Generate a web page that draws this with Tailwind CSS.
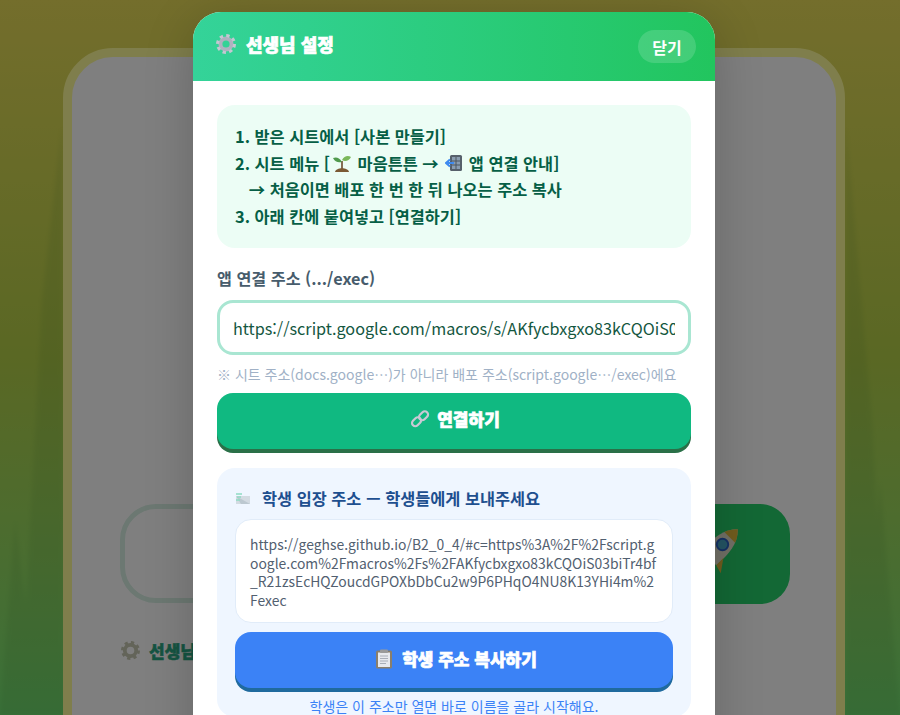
<!DOCTYPE html>
<html lang="ko">
<head>
<meta charset="utf-8">
<script src="https://cdn.jsdelivr.net/npm/@tailwindcss/browser@4"></script>
<title>선생님 설정</title>
</head>
<body class="font-['Noto_Sans_CJK_KR','Noto_Sans',sans-serif]">
<div class="relative h-[715px] w-[900px] overflow-hidden bg-gradient-to-b from-[#e8dc58] via-[#b4d048] to-[#72e272]">
  <svg class="absolute inset-0 blur-[2px]" width="900" height="715" viewBox="0 0 900 715" fill="#3f7a30" opacity="0.1">
    <path d="M20 715 L42 300 L62 125 L64 715Z"/>
    <path d="M0 715 L15 520 L40 715Z"/>
    <path d="M846 715 L846 125 L872 420 L886 715Z"/>
    <path d="M860 715 L880 480 L900 715Z"/>
  </svg>
  <div class="relative pl-[63px] pt-[48px]">
    <div class="flex h-[720px] w-[782px] flex-col rounded-[50px] border-[9px] border-[#fffc98] bg-white pl-[48px] pr-[46px] pt-[447px]">
      <div class="flex h-[100px] gap-4">
        <div class="h-[99px] flex-1 rounded-[36px] border-[5px] border-[#d8f0e4]"></div>
        <div class="flex w-[210px] items-center justify-center rounded-[30px] bg-[#27d16a] pb-[10px] pl-[66px]">
          <svg width="56" height="56" viewBox="0 0 44 44"><g transform="rotate(45 22 22)"><path d="M22 0C30 8 31 18 30 32H14C13 18 14 8 22 0Z" fill="#e4e0cc"/><path d="M22 0C25 3 27 6 28 9H16C17 6 19 3 22 0Z" fill="#e2b93c"/><circle cx="22" cy="17" r="4.5" fill="#49a9c8" stroke="#2d63c8" stroke-width="1.5"/><path d="M14 24L7 34L14 32ZM30 24L37 34L30 32Z" fill="#e2b93c"/><path d="M15 33H29L27 37H17Z" fill="#2d63c8"/></g></svg>
        </div>
      </div>
      <div class="mt-[37px] flex items-center gap-[9px] pl-[1px] text-[17px] font-black leading-none text-[#2aa884] [-webkit-text-stroke:0.5px_#2aa884]">
        <svg width="19" height="19" viewBox="0 0 20 20"><circle cx="10" cy="10" r="6" fill="none" stroke="#c7c8b2" stroke-width="4"/><circle cx="10" cy="10" r="8.5" fill="none" stroke="#c7c8b2" stroke-width="3" stroke-dasharray="3.4 3.3"/></svg>
        <span>선생님</span>
      </div>
    </div>
  </div>

  <div class="absolute inset-0 bg-black/50"></div>

  <div class="absolute left-[193px] top-[12px] h-[760px] w-[522px] overflow-hidden rounded-[28px] bg-white shadow-[0_10px_50px_rgba(0,0,0,0.2)]">
    <header class="flex h-[69px] items-center justify-between bg-gradient-to-r from-[#34d399] to-[#22c55e] pl-[23px] pr-[19px]">
      <div class="flex items-center gap-[10px] text-[18px] font-black leading-none text-white [-webkit-text-stroke:0.7px_white] -translate-y-[3px]">
        <svg width="20" height="20" viewBox="0 0 20 20"><circle cx="10" cy="10" r="5.6" fill="none" stroke="#aeb2c0" stroke-width="4"/><circle cx="10" cy="10" r="8.5" fill="none" stroke="#c5c7d2" stroke-width="3" stroke-dasharray="3.4 3.27"/></svg>
        <span>선생님 설정</span>
      </div>
      <button class="h-[33px] w-[58px] rounded-full bg-white/15 text-[16px] font-bold leading-none text-white">닫기</button>
    </header>

    <div class="px-[24px] pt-[24px]">
      <div class="h-[143px] rounded-[18px] bg-[#ecfdf5] px-[18px] pt-[18px] text-[16.35px] font-bold leading-[26.7px] text-[#065f46]">
        <p>1. 받은 시트에서 [사본 만들기]</p>
        <p class="flex items-center whitespace-pre">2. 시트 메뉴 [<svg class="ml-[2px] mr-[1px]" width="20" height="20" viewBox="0 0 20 20"><path d="M10 17V8" stroke="#6b4a2b" stroke-width="1.6"/><path d="M10 9C7 4 4 4 1 5 3 9 6 10 10 9Z" fill="#4f9a4c"/><path d="M10 7C12 3 16 2 19 4 17 8 13 9 10 7Z" fill="#7ab85a"/><path d="M3 19C4 14 16 14 17 19Z" fill="#7b5a34"/></svg> 마음튼튼 → <svg class="ml-[2px] mr-[1px]" width="18" height="20" viewBox="0 0 18 20"><rect x="5" y="2" width="12" height="16" rx="1.5" fill="#56606b"/><rect x="7" y="4" width="8" height="12" fill="#8a9db0"/><path d="M11 4V16M7 8H15M7 12H15" stroke="#4c5660" stroke-width="1"/><path d="M1 10H9M5 6.5L1 10 5 13.5" fill="none" stroke="#3f8bf0" stroke-width="2.2"/></svg> 앱 연결 안내]</p>
        <p class="whitespace-pre">   → 처음이면 배포 한 번 한 뒤 나오는 주소 복사</p>
        <p>3. 아래 칸에 붙여넣고 [연결하기]</p>
      </div>

      <label class="mt-[18px] block text-[16.2px] font-bold leading-[24px] text-[#475c6c]">앱 연결 주소 (.../exec)</label>
      <input class="mt-[10px] block h-[55px] w-full rounded-[16px] border-[3px] border-[#a9e6d2] bg-white px-[13px] text-[16.2px] text-[#14573f] outline-none" value="https://script.google.com/macros/s/AKfycbxgxo83kCQOiS03biTr4bf_R21zsEcHQZoucdGPOXbDbCu2w9P6PHqO4NU8K13YHi4m/exec">
      <p class="mt-[8px] text-[14px] leading-[22px] text-[#a0b1c6]">※ 시트 주소(docs.google…)가 아니라 배포 주소(script.google…/exec)에요</p>
      <button class="mt-[8px] flex h-[56px] w-full items-center justify-center gap-[7px] rounded-[16px] bg-[#10b981] pb-[4px] pl-[2px] text-[17px] font-black text-white shadow-[0_4px_0_#2a7048] [-webkit-text-stroke:0.7px_white]">
        <svg width="20" height="20" viewBox="0 0 20 20" fill="none" stroke="#c9c9d4" stroke-width="2.2"><rect x="1.5" y="9.5" width="10" height="6.5" rx="3.2" transform="rotate(-45 6.5 12.7)"/><rect x="8.5" y="3.5" width="10" height="6.5" rx="3.2" transform="rotate(-45 13.5 6.7)"/></svg>
        <span>연결하기</span>
      </button>

      <section class="mt-[19px] rounded-[18px] bg-[#eff6ff] px-[18px] pt-[17px]">
        <h3 class="flex items-center gap-[10px] text-[16.35px] font-bold leading-[26px] text-[#1e4f8f]">
          <svg width="17" height="14" viewBox="0 0 17 14"><path d="M1 5H15V13H1Z" fill="#d3dbe2"/><path d="M1 5L15 13H6Z" fill="#bcc8d0"/><path d="M1 3H7M2 6H6M1 9H5" stroke="#8fdcc4" stroke-width="1.4"/></svg>
          <span>학생 입장 주소 — 학생들에게 보내주세요</span>
        </h3>
        <div class="mt-[8px] h-[104px] break-all rounded-[16px] border border-[#e1ecf9] bg-white pl-[14px] pr-[12px] pt-[15px] text-[13.9px] leading-[18.6px] text-[#526070]">https://geghse.github.io/B2_0_4/#c=https%3A%2F%2Fscript.google.com%2Fmacros%2Fs%2FAKfycbxgxo83kCQOiS03biTr4bf_R21zsEcHQZoucdGPOXbDbCu2w9P6PHqO4NU8K13YHi4m%2Fexec</div>
        <button class="mt-[9px] flex h-[56px] w-full items-center justify-center gap-[9px] rounded-[16px] bg-[#3b82f6] pb-[3px] pl-[4px] text-[17px] font-black text-white shadow-[0_4px_0_#1f6a9e] [-webkit-text-stroke:0.7px_white]">
          <svg width="18" height="20" viewBox="0 0 18 20"><rect x="1" y="1.5" width="16" height="18" rx="1.5" fill="#8a7f6c"/><rect x="3" y="3.5" width="12" height="14.5" fill="#e7e9ee"/><rect x="5" y="0.5" width="8" height="3.5" rx="1" fill="#9a9a9a"/><path d="M5 7H13M5 9.5H13M5 12H13M5 14.5H11" stroke="#a9aeb8" stroke-width="1"/></svg>
          <span>학생 주소 복사하기</span>
        </button>
        <p class="mt-[7px] text-center text-[14px] leading-[22px] text-[#3b82f6]">학생은 이 주소만 열면 바로 이름을 골라 시작해요.</p>
      </section>
    </div>
  </div>
</div>
</body>
</html>
